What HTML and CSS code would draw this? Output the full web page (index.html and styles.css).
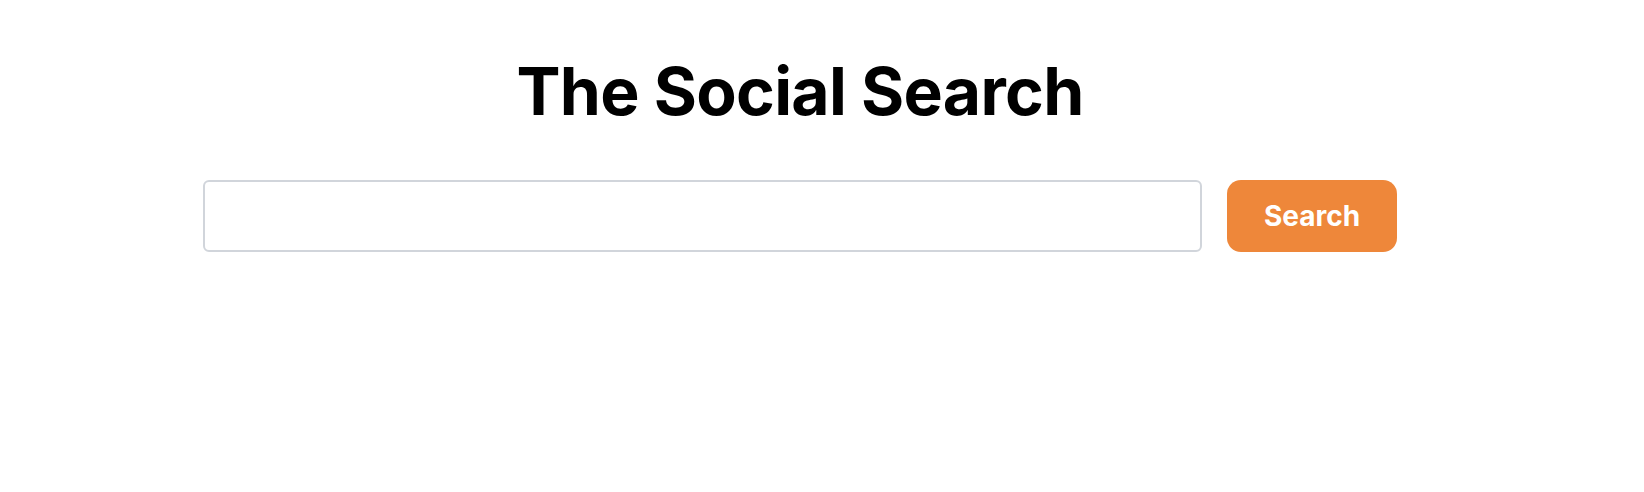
FILE: index.html
```html
<!DOCTYPE html>
<html lang="en">
    <head>
        <meta charset="utf-8" />
        <meta name="viewport" content="width=device-width, initial-scale=1.0" />
        <title>The Social Search</title>
        <link rel="stylesheet" href="styles.css">
    </head>
    <body>
        <main class="contenedor">
            <h1 class="titulo">The Social Search</h1>

            <form class="buscador" onsubmit="return false">
                <input class="buscador_input" type="text" />
                <button class="buscador_boton" type="submit">Search</button>
            </form>
        </main>
    </body>
</html>
```

FILE: styles.css
```css
* {
    padding: 0;
    margin: 0;
    box-sizing: border-box;
}

body {
    font-family: Inter, "Noto Sans", Arial, sans-serif;
    background-color: #fff;
    color: #000;
}

.contenedor {
    display: flex;
    flex-direction: column;
    align-items: center;
    width: 1194px;
    margin-left: 203px;
    padding-top: 51px;
}

.titulo {
    font-size: 66px;
    font-weight: 700;
    line-height: 80px;
    letter-spacing: -0.7px;
}

.buscador {
    display: flex;
    align-items: flex-start;
    gap: 25px;
    width: 100%;
    margin-top: 49px;
}

.buscador_input {
    flex: 1;
    height: 72px;
    border: 2px solid #d1d5db;
    border-radius: 6px;
    font-family: inherit;
    font-size: 20px;
    padding: 0 16px;
    outline: none;
}

.buscador_boton {
    width: 170px;
    height: 72px;
    border: none;
    border-radius: 14px;
    background-color: #ee873a;
    color: #fff;
    font-family: inherit;
    font-size: 28px;
    font-weight: 700;
    cursor: pointer;
}
```
